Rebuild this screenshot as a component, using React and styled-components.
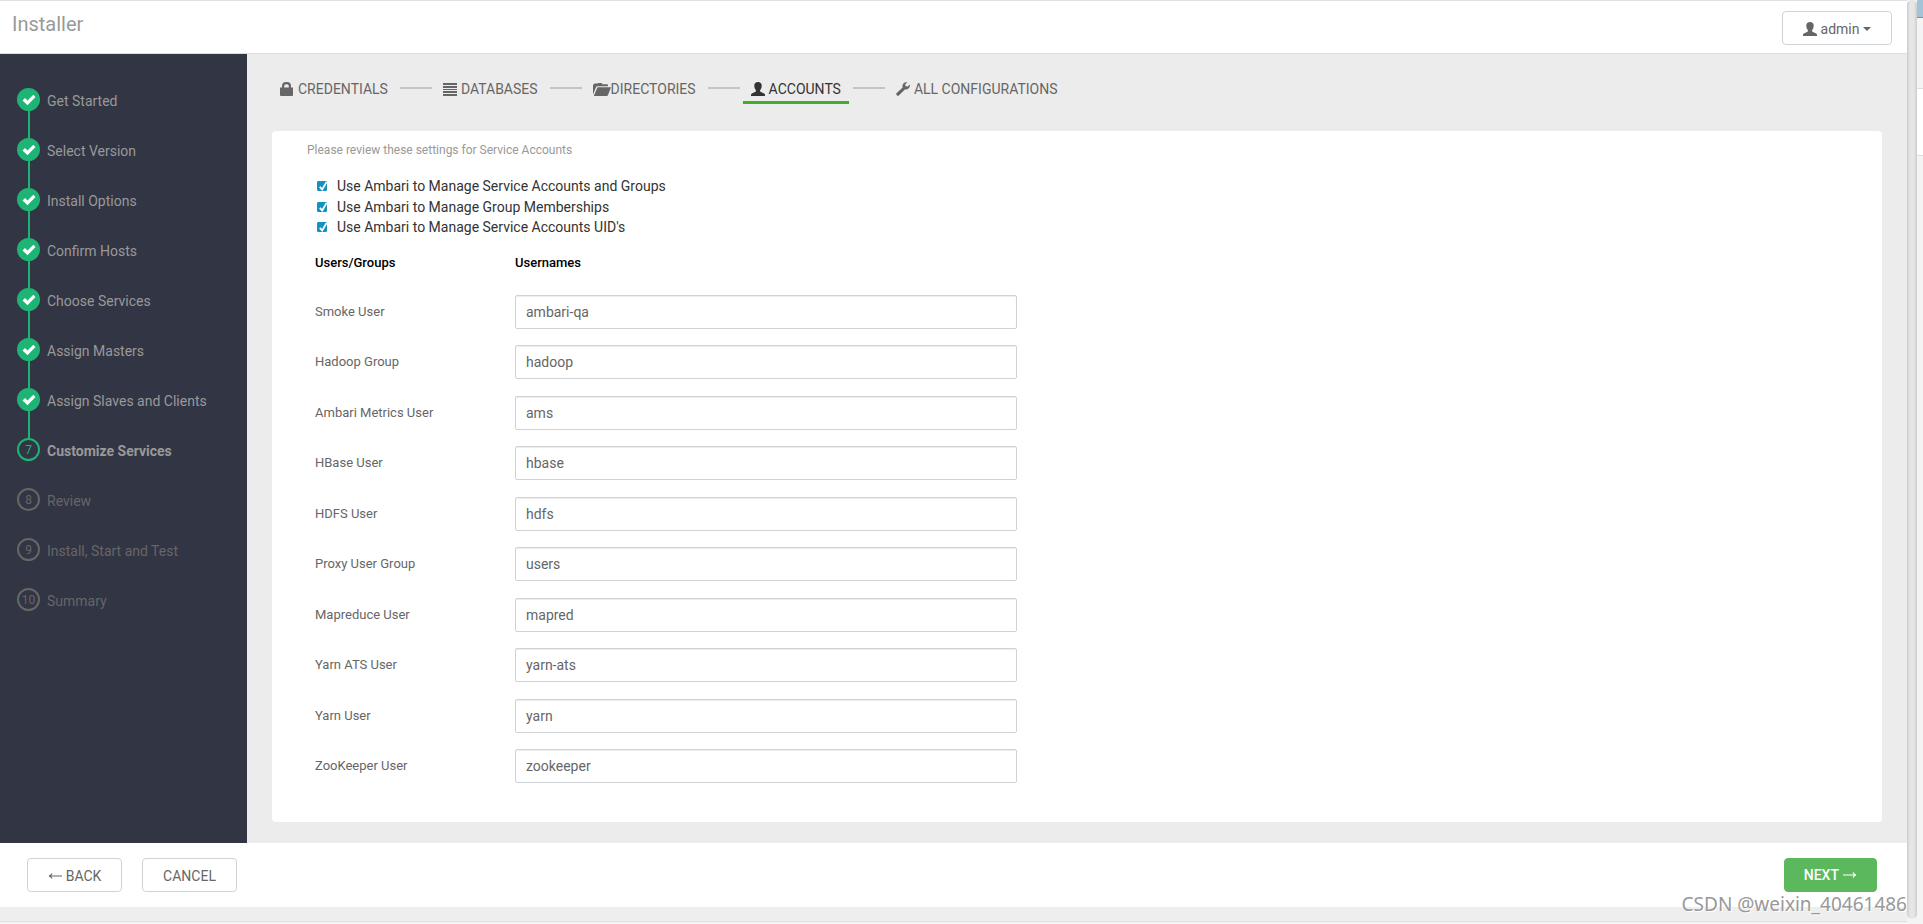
import { useState } from 'react'
import styled, { createGlobalStyle, css } from 'styled-components'

const steps = [
    'Get Started',
    'Select Version',
    'Install Options',
    'Confirm Hosts',
    'Choose Services',
    'Assign Masters',
    'Assign Slaves and Clients',
    'Customize Services',
    'Review',
    'Install, Start and Test',
    'Summary',
]
const currentStep = 7

const tabs = [
    { name: 'Credentials', Icon: LockIcon },
    { name: 'Databases', Icon: ListIcon },
    { name: 'Directories', Icon: FolderIcon, tight: true },
    { name: 'Accounts', Icon: UserIcon },
    { name: 'All Configurations', Icon: WrenchIcon },
]

const options = [
    'Use Ambari to Manage Service Accounts and Groups',
    'Use Ambari to Manage Group Memberships',
    "Use Ambari to Manage Service Accounts UID's",
]

const accounts = [
    ['Smoke User', 'ambari-qa'],
    ['Hadoop Group', 'hadoop'],
    ['Ambari Metrics User', 'ams'],
    ['HBase User', 'hbase'],
    ['HDFS User', 'hdfs'],
    ['Proxy User Group', 'users'],
    ['Mapreduce User', 'mapred'],
    ['Yarn ATS User', 'yarn-ats'],
    ['Yarn User', 'yarn'],
    ['ZooKeeper User', 'zookeeper'],
]

export default function App() {
    const [tab, setTab] = useState('Accounts')

    return (
        <>
            <GlobalStyle />
            <Screen>
                <Page>
                    <Header>
                        <h1>Installer</h1>
                        <AdminButton type="button">
                            <UserIcon />
                            admin
                            <Caret />
                        </AdminButton>
                    </Header>
                    <Body>
                        <Sidebar>
                            <StepList>
                                {steps.map((step, i) => (
                                    <Step key={step} $done={i < currentStep} $current={i === currentStep}>
                                        <StepMark $done={i < currentStep} $current={i === currentStep}>
                                            {i < currentStep ? <CheckIcon /> : i}
                                        </StepMark>
                                        <a href="#">{step}</a>
                                    </Step>
                                ))}
                            </StepList>
                        </Sidebar>
                        <Content>
                            <Tabs>
                                {tabs.map(({ name, Icon, tight }) => (
                                    <li key={name}>
                                        <Tab type="button" $active={tab === name} $tight={tight} onClick={() => setTab(name)}>
                                            <Icon />
                                            {name}
                                        </Tab>
                                    </li>
                                ))}
                            </Tabs>
                            <Panel>
                                <Hint>Please review these settings for Service Accounts</Hint>
                                <Options>
                                    {options.map((option) => (
                                        <Option key={option}>
                                            <Checkbox />
                                            {option}
                                        </Option>
                                    ))}
                                </Options>
                                <Accounts>
                                    <thead>
                                        <tr>
                                            <th>Users/Groups</th>
                                            <th>Usernames</th>
                                        </tr>
                                    </thead>
                                    <tbody>
                                        {accounts.map(([label, value]) => (
                                            <tr key={label}>
                                                <td><label htmlFor={value}>{label}</label></td>
                                                <td><TextInput id={value} type="text" defaultValue={value} /></td>
                                            </tr>
                                        ))}
                                    </tbody>
                                </Accounts>
                            </Panel>
                        </Content>
                    </Body>
                    <Footer>
                        <Button type="button"><ArrowIcon back /> Back</Button>
                        <Button type="button">Cancel</Button>
                        <NextButton type="button">Next <ArrowIcon /></NextButton>
                    </Footer>
                    <BottomEdge />
                    <Watermark>CSDN @weixin_40461486</Watermark>
                </Page>
                <ScrollTrack>
                    <ScrollThumb />
                </ScrollTrack>
                <WindowEdge>
                    <EdgeTop />
                    <EdgeBar />
                    <EdgeGap />
                </WindowEdge>
            </Screen>
        </>
    )
}

function Checkbox() {
    return (
        <CheckboxWrap>
            <input type="checkbox" defaultChecked />
            <svg viewBox="0 0 10 10" width="10" height="10">
                <path d="M2.8 5.8 5.2 8.4 9.6 1" fill="none" stroke="#fff" strokeWidth="1.8" />
            </svg>
        </CheckboxWrap>
    )
}

function CheckIcon() {
    return (
        <svg viewBox="0 0 14 12" width="14" height="12">
            <path d="M.5 6.6 3 4.1l2.5 2.5L11.3.8l2.2 2.2-8 8.2z" fill="#fff" />
        </svg>
    )
}

function LockIcon() {
    return (
        <svg viewBox="0 0 14 14" width="14" height="14">
            <path d="M0 5.5h2V4q0-4 4-4h1q4 0 4 4v1.5h2V13q0 1-1 1H1q-1 0-1-1zM4.2 5.5h4.6V4q0-1.800-2-1.800h-.6q-2 0-2 1.800z" fill="currentColor" fillRule="evenodd" />
        </svg>
    )
}

function ListIcon() {
    return (
        <svg viewBox="0 0 14 14" width="14" height="14">
            <path d="M0 1h14v2H0zM0 4h14v2H0zM0 7h14v1H0zM0 9h14v2H0zM0 12h14v2H0z" fill="currentColor" />
        </svg>
    )
}

function FolderIcon() {
    return (
        <svg viewBox="0 0 18 14" width="18" height="14">
            <path d="M0 12.5V3l1.500-1.400h3L5.500 1h3l1 1.300H14q1 0 1 1v1H3.500zM4.500 5.300H18L15 13q-.3 1-1.300 1H.8z" fill="currentColor" />
        </svg>
    )
}

function UserIcon() {
    return (
        <svg viewBox="0 0 14 14" width="14" height="14">
            <path d="M7 0c2.300 0 3.700 1.300 3.700 3.600 0 2-.6 3.700-1.600 4.700v1.300l4 1.900q.9.500.9 1.200V14H0v-1.300q0-.7.9-1.200l4-1.900V8.300c-1-1-1.600-2.700-1.600-4.700C3.300 1.300 4.700 0 7 0z" fill="currentColor" />
        </svg>
    )
}

function WrenchIcon() {
    return (
        <svg viewBox="0 0 14 14" width="14" height="14">
            <path d="M.5 11.300 6.600 5.600C6 3.200 7.200.9 9.500.3q1-.3 2 0L9.200 2.300l.4 2 2 .3 2.300-2.100c.5 3-2 5.500-5 4.900l-6.100 6.200q-.8.7-1.600 0l-.8-.8q-.6-.8.1-1.500z" fill="currentColor" />
        </svg>
    )
}

function ArrowIcon({ back }) {
    return (
        <svg viewBox="0 0 14 8" width="14" height="8">
            <path
                d={back ? 'M14 4H1M4 1.500Q3 3.500 1 4q2 .5 3 2.500' : 'M0 4h13M10 1.500q1 2 3 2.500-2 .5-3 2.500'}
                fill="none"
                stroke="currentColor"
                strokeWidth="1.2"
            />
        </svg>
    )
}

const GlobalStyle = createGlobalStyle`
    * {
        box-sizing: border-box;
    }
    body {
        margin: 0;
        font-family: Roboto, sans-serif;
        font-size: 14px;
        line-height: 20px;
        color: #333;
        background: #f0f0f0;
    }
    button, input {
        font: inherit;
    }
    svg {
        flex: none;
    }
`

const Screen = styled.div`
    display: flex;
    min-height: 100vh;
`

const Page = styled.div`
    position: relative;
    display: flex;
    flex: 1;
    flex-direction: column;
`

const Header = styled.header`
    display: flex;
    justify-content: space-between;
    align-items: flex-start;
    height: 54px;
    padding: 10px 15px 0 12px;
    background: #fff;
    border-top: 1px solid #e0e0e0;
    border-bottom: 1px solid #ddd;
    h1 {
        margin: 0;
        padding-top: 3px;
        font-size: 20px;
        line-height: 20px;
        font-weight: 400;
        color: #999;
    }
`

const Button = styled.button`
    display: flex;
    justify-content: center;
    align-items: center;
    gap: 4px;
    min-width: 95px;
    height: 34px;
    padding: 1px 19px 0;
    color: #666;
    text-transform: uppercase;
    background: #fff;
    border: 1px solid #cfd3d7;
    border-radius: 4px;
    cursor: pointer;
`

const AdminButton = styled(Button)`
    min-width: 110px;
    text-transform: none;
`

const Caret = styled.span`
    border-top: 4px solid #666;
    border-left: 4px solid transparent;
    border-right: 4px solid transparent;
`

const NextButton = styled(Button)`
    min-width: 93px;
    margin-left: auto;
    padding-top: 0;
    font-weight: 500;
    color: #fff;
    background: #5cb85c;
    border-color: #5cb85c;
`

const Body = styled.div`
    display: flex;
    flex: 1;
`

const Sidebar = styled.nav`
    width: 247px;
    flex: none;
    padding: 34px 17px;
    background: #323544;
`

const StepList = styled.ol`
    display: flex;
    flex-direction: column;
    gap: 27px;
    margin: 0;
    padding: 0;
    list-style: none;
`

const Step = styled.li`
    position: relative;
    display: flex;
    gap: 7px;
    height: 23px;
    a {
        padding-top: 3px;
        font-weight: ${({ $current }) => ($current ? 700 : 400)};
        line-height: 20px;
        color: ${({ $done, $current }) => ($done || $current ? '#999' : '#666')};
        text-decoration: none;
    }
    ${({ $done }) => $done && css`
        &::after {
            content: '';
            position: absolute;
            top: 23px;
            left: 11px;
            width: 2px;
            height: 27px;
            background: #1eb475;
        }
    `}
`

const StepMark = styled.span`
    display: flex;
    flex: none;
    justify-content: center;
    align-items: center;
    width: 23px;
    height: 23px;
    font-size: 12px;
    color: ${({ $current }) => ($current ? '#1eb475' : '#666')};
    background: ${({ $done }) => ($done ? '#1eb475' : 'transparent')};
    border: 2px solid ${({ $done, $current }) => ($done || $current ? '#1eb475' : '#666')};
    border-radius: 50%;
`

const Content = styled.main`
    flex: 1;
    padding: 20px 25px;
    background: #ececec;
`

const Tabs = styled.ul`
    display: flex;
    margin: 0;
    padding: 0;
    list-style: none;
    li {
        display: flex;
        align-items: flex-start;
    }
    li + li::before {
        content: '';
        width: 32px;
        height: 2px;
        margin: 13px 3px 0 4px;
        background: #c4c4c4;
    }
`

const Tab = styled.button`
    display: flex;
    align-items: center;
    gap: ${({ $tight }) => ($tight ? 0 : '4px')};
    height: 30px;
    padding: 3px 8px 0;
    color: ${({ $active }) => ($active ? '#333' : '#666')};
    text-transform: uppercase;
    background: none;
    border: 0;
    border-bottom: 3px solid ${({ $active }) => ($active ? '#3fae2a' : 'transparent')};
    cursor: pointer;
`

const Panel = styled.section`
    margin-top: 27px;
    padding: 9px 35px 30px;
    background: #fff;
    border-radius: 4px;
`

const Hint = styled.p`
    margin: 0;
    font-size: 12px;
    color: #999;
`

const Options = styled.div`
    padding: 16px 10px 0;
`

const Option = styled.label`
    display: flex;
    align-items: center;
    gap: 10px;
    height: 20px;
    &:first-child {
        margin-bottom: 1px;
    }
`

const CheckboxWrap = styled.span`
    display: grid;
    width: 10px;
    height: 10px;
    input, svg {
        grid-area: 1 / 1;
    }
    input {
        appearance: none;
        width: 10px;
        height: 10px;
        margin: 0;
        border: 1px solid #1491c1;
        border-radius: 1px;
    }
    input:checked {
        background: #1491c1;
    }
    svg {
        z-index: 1;
        pointer-events: none;
    }
`

const Accounts = styled.table`
    margin: 16px 8px 0;
    border-collapse: collapse;
    font-size: 13px;
    th {
        padding: 0 0 14px;
        font-weight: 500;
        text-align: left;
        color: #000;
    }
    td {
        height: 50px;
        padding: 8px 0 0;
        line-height: 34px;
        vertical-align: top;
        color: #666;
    }
    tr:nth-child(even) td {
        height: 51px;
    }
    th:first-child {
        width: 200px;
    }
`

const TextInput = styled.input`
    display: block;
    width: 502px;
    height: 34px;
    padding: 6px 10px;
    font-size: 14px;
    line-height: 20px;
    color: #666;
    background: #fff;
    border: 1px solid #cfd3d7;
    border-radius: 2px;
    box-shadow: inset 0 1px 1px rgba(0, 0, 0, 0.075);
`

const Footer = styled.footer`
    display: flex;
    gap: 20px;
    height: 64px;
    padding: 15px 30px 15px 27px;
    background: #fff;
`

const BottomEdge = styled.div`
    height: 17px;
    background: linear-gradient(#eee 14px, #e0e0e0 14px 15px, #f4f4f4 15px);
`

const Watermark = styled.div`
    position: absolute;
    right: 0;
    bottom: 8px;
    font-family: 'Noto Sans', sans-serif;
    font-size: 19px;
    line-height: 24px;
    color: #999;
    text-shadow: 1px 1px 0 #fff;
`

const ScrollTrack = styled.div`
    width: 10px;
    background: #f4f4f4;
`

const ScrollThumb = styled.div`
    height: calc(100% - 5px);
    background: linear-gradient(90deg, #ccc, #e6e6e6 30% 70%, #ccc);
    border-radius: 5px;
`

const WindowEdge = styled.div`
    width: 6px;
    background: #f4f4f4;
`

const EdgeTop = styled.div`
    height: 18px;
    background: #a3c4d8;
    border-bottom: 1px solid #6f93a8;
`

const EdgeBar = styled.div`
    height: 71px;
    border-bottom: 1px solid #ddd;
`

const EdgeGap = styled.div`
    height: 67px;
    background: #fff;
    border-bottom: 1px solid #ddd;
`
